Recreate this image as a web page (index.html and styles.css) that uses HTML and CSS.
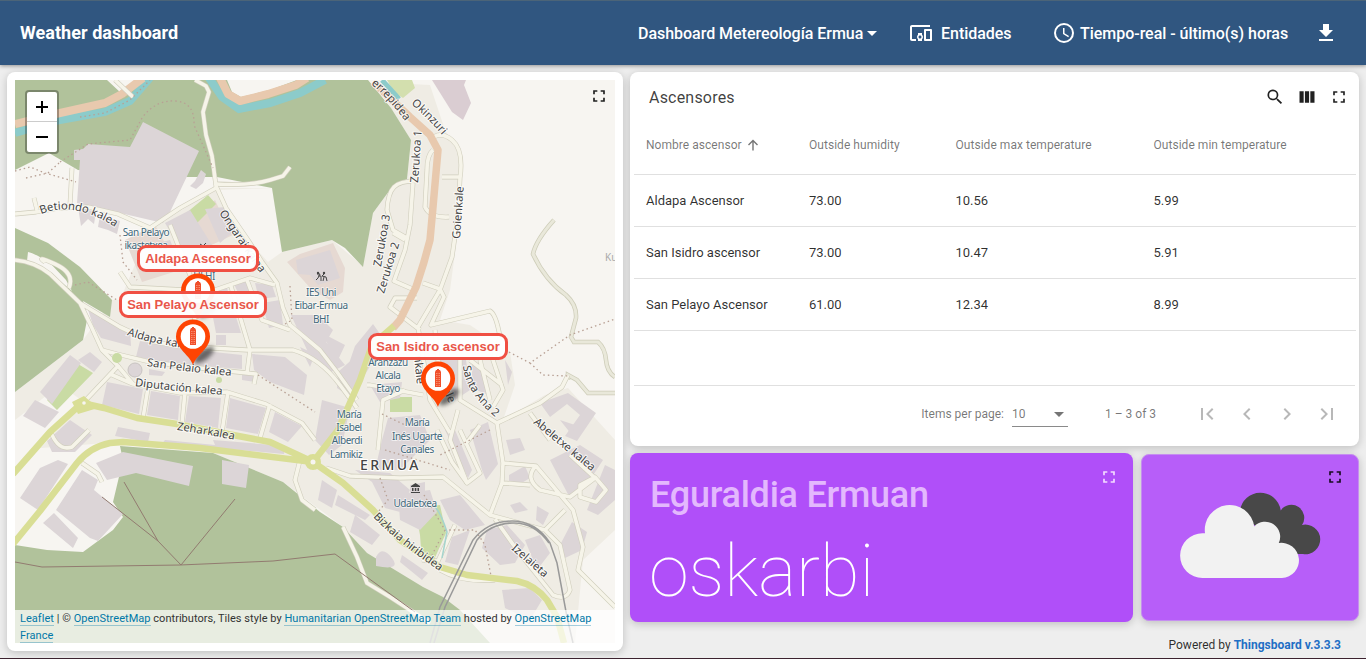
FILE: index.html
```html
<!DOCTYPE html>
<html lang="es">
<head>
<meta charset="utf-8">
<title>Weather dashboard</title>
<link rel="stylesheet" href="styles.css">
</head>
<body>
<svg class="defs" width="0" height="0">
  <symbol id="full" viewBox="0 0 24 24"><path d="M7 14H5v5h5v-2H7v-3zm-2-4h2V7h3V5H5v5zm12 7h-3v2h5v-5h-2v3zM14 5v2h3v3h2V5h-5z"/></symbol>
  <symbol id="pin" viewBox="0 0 60 50">
    <ellipse class="pin-shadow" cx="31" cy="36" rx="12" ry="5" transform="rotate(-38 31 36)"/>
    <path class="pin-body" d="M20 46C17 36 3 30 3 17.500a17 17 0 0 1 34 0C37 30 23 36 20 46z"/>
    <circle class="pin-hole" cx="20" cy="17.500" r="12.300"/>
    <path class="pin-tower" d="M17 26V11l1-2h1V8h2v1h1l1 2v15z"/>
    <path class="pin-windows" d="M18.500 12v13M20 12v13M21.500 12v13"/>
  </symbol>
</svg>
<header class="toolbar">
  <h1 class="title">Weather dashboard</h1>
  <div class="state"><span>Dashboard Metereología Ermua</span><i class="caret"></i></div>
  <div class="entities">
    <svg class="icon24" viewBox="0 0 24 24"><path d="M3 6h18V4H3c-1.100 0-2 .9-2 2v12c0 1.100.9 2 2 2h4v-2H3V6zm10 6H9v1.780c-.61.550-1 1.330-1 2.220s.39 1.670 1 2.220V20h4v-1.780c.61-.550 1-1.340 1-2.220s-.39-1.670-1-2.220V12zm-2 5.500c-.83 0-1.500-.67-1.500-1.500s.67-1.500 1.500-1.500 1.500.67 1.500 1.500-.67 1.500-1.500 1.500zM22 8h-6c-.5 0-1 .5-1 1v10c0 .5.5 1 1 1h6c.5 0 1-.5 1-1V9c0-.5-.5-1-1-1zm-1 10h-4v-8h4v8z"/></svg>
    <span>Entidades</span>
  </div>
  <div class="time">
    <svg class="icon24" viewBox="0 0 24 24"><path d="M12 2a10 10 0 1 0 0 20 10 10 0 0 0 0-20zm0 18a8 8 0 1 1 0-16 8 8 0 0 1 0 16zm.5-13H11v6l5.250 3.150.75-1.230-4.500-2.670z"/></svg>
    <span>Tiempo-real - último(s) horas</span>
  </div>
  <svg class="icon24 download" viewBox="0 0 24 24"><path d="M19 9h-4V3H9v6H5l7 7 7-7zM5 18v2h14v-2H5z"/></svg>
</header>

<main class="dash">
  <section class="card map-card">
    <div class="map">
      <svg class="tiles" viewBox="15 80 600 563">
        <defs>
          <g id="roads">
            <path d="M195 80L206 86 209 92 203 112 206 135 212 156 216 186 226 208 248 240 262 262 277 283 283 308 290 325 320 350 337 372 357 400"/>
            <path d="M216 184Q250 186 270 180L283 176 290 167M216 188L180 208 150 228 118 214 88 207 60 208 36 212 15 214M72 168L70 205M34 198L37 210M115 80L133 97"/>
            <path d="M15 260Q35 262 50 274L80 303 92 328 102 350 118 366 84 402M45 262Q35 255 55 264T69 288M80 303L120 327 150 341 177 346 247 350 293 350Q320 358 340 385L357 408"/>
            <path d="M102 350L117 354 150 362 200 368 256 374 254 384M110 374L133 384 180 393 227 392 266 404 302 423 315 440M148 388L143 418M185 392L182 424M228 392L222 432M270 404L260 438M247 373L250 350 230 283M118 366L133 384M120 272L130 287 185 290 200 335M215 290L250 278 275 285M247 280L262 320 290 330M225 310L255 305M170 225L190 275"/>
            <path d="M430 140Q440 130 452 140T460 178L458 215 452 257 440 290 418 327 430 400 450 433M442 177H460M433 150Q427 155 427 170L425 207Q430 218 449 217M415 181Q400 181 394 187T387 210L393 230 407 238M413 183L410 225 405 250 394 281 417 291M405 240L393 233M417 298L395 298 390 307 420 330M423 283L440 289 444 297 431 325 490 311Q496 314 500 337L493 360 503 390 493 407M435 330L441 390M470 360L502 385M460 358L460 400 497 423M480 360L490 400M367 385L370 385 423 395M405 390L383 400 378 450M458 410L450 440 467 483"/>
            <path d="M497 423L540 403 562 387 568 375M497 423L503 463 502 483 490 515 443 477 400 478 350 476 326 468M437 430L452 462 467 483 480 473 460 430M480 425L465 445M503 463L536 466 573 510 583 547 578 570 615 607M536 466Q524 478 540 490L570 497 595 478 570 455M490 515L545 530 560 545 570 590Q566 601 553 595L517 550 495 519M503 483L530 485M545 530L565 510M530 413L550 440M580 485L595 477 606 490 596 502 580 497zM455 525L438 561 422 560M440 570Q462 583 495 580"/>
            <path d="M343 527L357 557 367 583 390 597 430 623M300 460L295 480 302 500 315 510M50 430Q58 452 72 447L89 430M82 463L98 474 102 482"/>
          </g>
          <path id="l-bet" d="M41 214Q75 200 118 229"/>
          <path id="l-ong" d="M219 213Q240 245 265 280"/>
          <path id="l-ald" d="M127 335Q150 344 210 352"/>
          <path id="l-pel" d="M147 366Q180 371 232 376"/>
          <path id="l-dip" d="M135 386Q170 391 225 395"/>
          <path id="l-zeh" d="M177 430Q205 434 240 441"/>
          <path id="l-err" d="M371 84Q390 100 408 125"/>
          <path id="l-oki" d="M411 104Q428 118 450 144"/>
          <path id="l-san" d="M463 366Q465 395 505 425"/>
          <path id="l-abe" d="M533 423Q560 446 600 478"/>
          <path id="l-biz" d="M373 517Q400 545 447 576"/>
          <path id="l-ize" d="M511 549L550 583"/>
        </defs>
        <rect class="land" x="15" y="80" width="600" height="563"/>
        <path class="urban" d="M83 340L112 300 150 230 217 188 272 188 282 252 332 240 363 266 373 213 392 187 407 179 411 140 391 108 372 82 430 85 445 130 462 160 462 200 450 290 440 320 470 325 510 352 515 385 503 420 545 395 568 388 615 440V530L583 560 575 643H430L343 527 283 482 213 453 120 442 15 450V392z"/>
        <path class="land" d="M217 190L272 188 282 252 268 262 248 240zM15 420L60 385 84 402 15 475zM89 207L150 229 120 300 112 300 80 267 50 243z"/>
        <path class="forest" d="M15 80H368L391 108 411 140 407 179 392 187 373 213 363 267 345 248 332 240 282 252 272 188 217 177H188L78 170 49 153 15 170z"/>
        <path class="forest" d="M15 228L48 243 80 267 112 300 110 317 83 301 87 320 83 340 15 392z"/>
        <path class="forest" d="M15 545L47 550 83 552 113 530 123 517 113 502 123 460 120 446 213 453 283 482 320 512 343 527 367 553 423 587 443 597 460 610 490 643H15z"/>
        <path class="land" d="M227 80L232 92 241 97 270 90 297 80zM107 80L121 93 137 80zM28 252Q34 253 50 263L66 280 72 291 48 271 27 261z"/>
        <path class="scrub" d="M387 80H412L415 88 403 98 394 92z"/>
        <path class="industrial" d="M432 80H466L464 85 471 103 463 120 452 112z"/>
        <path class="water" d="M15 133L60 120 105 112 130 101 150 78M209 78L222 97 239 109 270 103 300 93 325 80"/>
        <path class="water thin" d="M382 80L399 99"/>
        <path class="primary" d="M15 124L60 113 105 103 122 94 143 78M220 78L228 94 240 101 268 94 296 85 307 78"/>
        <path class="bldg" d="M143 122L199 151 170 212 163 223 77 203 80 160H74V150L83 149 88 144 130 147zM201 170L206 174 203 183 196 189 190 186 195 181z"/>
        <path class="school" d="M287 262L300 254 333 243 345 268 343 292 330 300 312 290zM190 222L215 200 222 215 233 235 205 248zM125 240L155 225 180 270 142 282z"/>
        <path class="grass" d="M185 214L208 195 216 204 197 223zM47 400L78 364 93 373 57 410zM390 397H412V412H390zM415 508L440 505 446 533 433 562 422 562 420 535z"/>
        <path class="bldg" d="M78 207L96 212 94 224 88 219 81 226zM100 215L120 221 117 234 108 230 98 227zM165 223L190 210 212 245 190 265zM205 209L225 207 235 230 220 243zM296 260L330 250 340 278 318 285 310 275 298 274z"/>
        <path class="bldg" d="M87 307L130 330 131 346 101 338 93 325zM140 341L176 348 242 355 242 369 178 364 136 357zM40 392L70 355 81 363 52 404zM78 360L90 352 102 362 94 372zM23 416L35 400 59 412 45 428zM107 382L143 389 139 414 102 405zM151 391L180 396 178 420 147 415zM189 396L221 398 218 428 185 422zM230 398L266 408 258 434 226 428zM275 412L302 426 288 442 269 432zM252 354L285 357 307 375 304 395 270 382 254 370zM149 369L165 372 162 376 149 375zM216 335H226V345H216zM242 373L255 375V382L242 380z"/>
        <path class="bldg" d="M208 292L227 288 241 333 216 333zM234 284L249 279 253 293 240 297zM255 283L272 285 276 297 259 299zM262 303L280 300 283 325 269 328zM291 315L318 315 333 330 326 342 345 365 329 373 307 350zM300 347L315 354 310 367zM320 332L345 345 338 360zM355 346L373 324 385 341 363 378 345 375zM338 372L357 355 365 375 352 398 337 388zM150 245L170 240 178 260 154 264zM118 427L150 433 148 442 115 436zM165 440L215 445 213 440 285 446 284 454 240 450 160 446z"/>
        <path class="bldg" d="M96 463L123 452 193 466 189 486 136 473 107 480zM222 460L249 465 246 488 222 484zM56 510L82 470 98 480 94 490 123 514 98 541 90 538zM43 523L54 513 78 538 73 548zM20 498L40 468 58 460 68 464 38 510zM47 441L70 420 92 435 75 452 52 452z"/>
        <path class="bldg" d="M370 385L402 382 400 398 380 402zM322 400L350 408 342 445 329 455 315 440zM388 418L420 415 430 440 400 470 375 470 382 440zM440 360L466 360 470 390 455 400zM472 360L486 370 488 395 472 388zM505 360L512 372 508 385zM445 430L455 430 472 470 468 478zM470 430L488 422 498 464 486 480 482 470zM506 440L520 438 525 450 510 455zM540 403L568 393 596 413 577 441 565 436 580 415 567 404 550 417zM509 475L525 466 530 478 520 484 509 481zM550 460L580 445 603 460 590 480 570 498zM605 465L615 470V500L598 515 587 510zM572 522L587 532 582 550 565 558 560 545zM355 470L390 473 410 490 400 512 385 508 372 482zM410 485L425 482V494H410zM398 494L430 490 437 512 420 530 400 520zM440 500L460 495 485 525 465 530 450 520zM452 537L470 530 458 565 445 562zM487 530L507 525 525 545 515 563 500 565 482 548zM525 540L540 535 550 553 537 570zM510 505L520 502 528 510 515 513zM502 590L530 588 542 600 530 620 505 608zM322 480L337 490 332 508 318 500zM338 495L370 515 365 520 335 505zM355 515L380 535 372 545 350 532zM402 555L428 573 422 580 400 562zM376 557Q382 545 392 558T376 566z"/>
        <path class="bldg" d="M560 420L575 425 572 435zM537 506L549 513 543 525 536 520z"/>
        <path class="tracks" d="M554 220Q536 240 533 254 545 280 566 295 577 305 576 318L571 337 574 342 598 342Q605 348 606 360T615 377M568 380L568 375 577 380 588 393H615"/>
        <path class="tracks in" d="M554 220Q536 240 533 254 545 280 566 295 577 305 576 318L571 337 574 342 598 342Q605 348 606 360T615 377M568 380L568 375 577 380 588 393H615"/>
        <use href="#roads" class="road-casing"/>
        <use href="#roads" class="road-fill"/>
        <path class="primary mid" d="M373 82L410 117 430 135 438 150 433 207 430 240 424 262 416 287 400 320 393 328"/>
        <path class="yellow" d="M13 474L50 432 82 403 104 408 137 418 177 424 233 435 270 442 313 462M13 544L40 511 77 463Q90 447 110 443L123 442 200 448 313 462 338 430 360 380 372 345 394 326M313 462L343 483 373 510 400 540 440 567 467 575 517 581Q535 585 547 600L557 617 564 643"/>
        <circle class="yellow dot" cx="313" cy="462" r="8"/><circle class="land" cx="313" cy="462" r="2.500"/><path class="yellow dot" d="M72 402L84 396 98 408 78 414z"/><circle class="land" cx="84" cy="403" r="1.800"/>
        <circle class="grass" cx="117" cy="358" r="5"/><circle class="grass" cx="219" cy="380" r="3"/><circle class="bldg ring" cx="135" cy="370" r="7"/>
        <path class="path" d="M60 162L88 144 130 140 142 118Q155 100 175 101T194 125L213 168M15 171L30 167 45 173 76 182M26 178L48 173 60 162M80 117L105 113 130 100 150 80M120 235L123 262 137 280M290 286L292 320 285 324M258 375L315 412M382 414L405 425M505 350L530 363 570 335 615 319M530 363L543 375 568 376M380 478L388 500 378 512M424 495L445 530 475 530 485 545 491 576M445 530L432 555M385 450L450 470M490 430L440 455M75 285L88 282 117 300"/>
        <path class="power" d="M15 562L42 567 180 565 273 561 335 554 415 612M102 497L158 541 181 565 235 499M124 482L158 541"/>
        <path class="rail" d="M430 643L440 607 473 540Q488 521 512 521T550 543L557 563 567 617 573 643M434 643L445 607 477 540Q490 524 512 523T549 543"/>
        <path class="stream" d="M433 505Q440 510 447 532L442 558"/>
        <g class="road-label">
          <text><textPath href="#l-bet">Betiondo kalea</textPath></text>
          <text><textPath href="#l-ong">Ongarai kalea</textPath></text>
          <text><textPath href="#l-ald">Aldapa kalea</textPath></text>
          <text><textPath href="#l-pel">San Pelaio kalea</textPath></text>
          <text><textPath href="#l-dip">Diputación kalea</textPath></text>
          <text><textPath href="#l-zeh">Zeharkalea</textPath></text>
          <text><textPath href="#l-err">errepidea</textPath></text>
          <text><textPath href="#l-oki">Okinzuri</textPath></text>
          <text><textPath href="#l-san">Santa Ana 2</textPath></text>
          <text><textPath href="#l-abe">Abeletxe kalea</textPath></text>
          <text><textPath href="#l-biz">Bizkaia hiribidea</textPath></text>
          <text><textPath href="#l-ize">Izelaieta</textPath></text>
          <text transform="translate(418 183) rotate(-86)">Zerukoa 1</text>
          <text transform="translate(460 239) rotate(-86)">Goienkale</text>
          <text transform="translate(381 267) rotate(-80)">Zerukoa 3</text>
          <text transform="translate(384 294) rotate(-73)">Zerukoa 2</text>
          <text transform="translate(414 356) rotate(84)">nkale</text>
          <text transform="translate(440 384) rotate(65)">kale</text>
        </g>
        <g class="poi-label">
          <text x="146" y="236">San Pelayo</text><text x="146" y="249">ikastetxea</text>
          <text x="204" y="280">HLHI</text>
          <text x="321" y="296">IES Uni</text><text x="321" y="309">Eibar-Ermua</text><text x="321" y="323">BHI</text>
          <text x="388" y="366">Aranzazu</text><text x="388" y="379">Alcala</text><text x="388" y="392">Etayo</text>
          <text x="349" y="418">María</text><text x="349" y="431">Isabel</text><text x="347" y="444">Alberdi</text><text x="346" y="458">Lamikiz</text>
          <text x="417" y="426">María</text><text x="417" y="440">Inés Ugarte</text><text x="417" y="453">Canales</text>
          <text x="415" y="507">Udaletxea</text>
        </g>
        <text class="faint" x="605" y="261">Ku</text>
        <text class="town" x="360" y="470">ERMUA</text>
        <path class="poi" d="M411 486L415.500 483 420 486V487H411zM412 488H413.500V491H412zM414.800 488H416.300V491H414.800zM417.500 488H419V491H417.500zM411 492H420V493H411z"/>
        <path class="kids" d="M317 274H320L318 278 316 280M318 276H321V281M325 273L322 276 326 277 327 281M324 277L323 281M200 244L203 246 206 243"/><circle class="poi" cx="318" cy="273" r="1.200"/><circle class="poi" cx="324" cy="273" r="1.200"/>
      </svg>
      <svg class="pin pin-aldapa"><use href="#pin"/></svg>
      <svg class="pin pin-pelayo"><use href="#pin"/></svg>
      <svg class="pin pin-isidro"><use href="#pin"/></svg>
      <div class="tip tip-aldapa">Aldapa Ascensor</div>
      <div class="tip tip-pelayo">San Pelayo Ascensor</div>
      <div class="tip tip-isidro">San Isidro ascensor</div>
      <div class="zoom"><span class="zoom-btn plus"></span><span class="zoom-btn"></span></div>
      <svg class="icon20 map-full"><use href="#full"/></svg>
      <div class="attribution"><a>Leaflet</a> | © <a>OpenStreetMap</a> contributors, Tiles style by <a>Humanitarian OpenStreetMap Team</a> hosted by <a>OpenStreetMap France</a></div>
    </div>
  </section>

  <div class="right">
    <section class="card table-card">
      <div class="table-head">
        <h2 class="table-title">Ascensores</h2>
        <svg class="icon20" viewBox="0 0 24 24"><path d="M15.500 14h-.79l-.28-.27A6.500 6.500 0 1 0 13.730 14.430l.27.28v.79l5 4.990L20.490 19l-4.990-5zm-6 0a4.500 4.500 0 1 1 0-9 4.500 4.500 0 0 1 0 9z"/></svg>
        <svg class="icon20" viewBox="0 0 24 24"><path d="M3 5h5v14H3zM9.500 5h5v14h-5zM16 5h5v14h-5z"/></svg>
        <svg class="icon20"><use href="#full"/></svg>
      </div>
      <div class="row head"><span>Nombre ascensor<svg class="sort" viewBox="0 0 12 12"><path d="M6 11.500V1.500M1.500 6L6 1.500 10.500 6"/></svg></span><span>Outside humidity</span><span>Outside max temperature</span><span>Outside min temperature</span></div>
      <div class="row"><span>Aldapa Ascensor</span><span>73.00</span><span>10.56</span><span>5.99</span></div>
      <div class="row"><span>San Isidro ascensor</span><span>73.00</span><span>10.47</span><span>5.91</span></div>
      <div class="row"><span>San Pelayo Ascensor</span><span>61.00</span><span>12.34</span><span>8.99</span></div>
      <div class="pager">
        <span>Items per page:</span>
        <span class="select">10<i class="select-arrow"></i></span>
        <span class="range">1 – 3 of 3</span>
        <svg class="nav" viewBox="0 0 24 24"><path d="M18.410 16.590L13.820 12l4.590-4.590L17 6l-6 6 6 6zM6 6h2v12H6z"/></svg>
        <svg class="nav" viewBox="0 0 24 24"><path d="M15.410 7.410L14 6l-6 6 6 6 1.410-1.410L10.830 12z"/></svg>
        <svg class="nav" viewBox="0 0 24 24"><path d="M10 6L8.590 7.410 13.170 12l-4.580 4.590L10 18l6-6z"/></svg>
        <svg class="nav" viewBox="0 0 24 24"><path d="M5.590 7.410L10.180 12l-4.590 4.590L7 18l6-6-6-6zM16 6h2v12h-2z"/></svg>
      </div>
    </section>
    <div class="bottom">
      <section class="card text-card">
        <div class="text-body"><div class="label">Eguraldia Ermuan</div><div class="value">oskarbi</div></div>
        <svg class="icon20"><use href="#full"/></svg>
      </section>
      <section class="card icon-card">
        <svg class="clouds" viewBox="1143 456 216 165">
          <path class="cloud-dark" d="M1241 512a20.500 20.500 0 0 1 40.700-.5 12.500 12.500 0 0 1 21.300 14.500 14.800 14.800 0 1 1 1 29H1285z"/>
          <path class="cloud-light" d="M1203.500 579a22.400 22.400 0 0 1 0-44.800H1206a24.700 24.700 0 1 1 49.200-6.700 15 15 0 0 1 24.600 16.500 17.600 17.600 0 1 1 3.200 35z"/>
        </svg>
        <svg class="icon20 icon-full"><use href="#full"/></svg>
      </section>
    </div>
    <footer class="powered">Powered by <a>Thingsboard v.3.3.3</a></footer>
  </div>
</main>
</body>
</html>
```
FILE: styles.css
```css
* { box-sizing: border-box; }
body { margin: 0; width: 1366px; height: 659px; overflow: hidden; background: #eee; border-bottom: 1px solid #3c222f; font-family: Roboto, sans-serif; color: rgba(0,0,0,.82); display: flex; flex-direction: column; }
.defs { position: absolute; }
h1, h2 { margin: 0; }
.toolbar { height: 65px; flex: none; background: #305680; border-top: 1px solid #4b6478; color: #fff; display: flex; align-items: center; padding: 0 28px 1px 20px; box-shadow: 0 1px 4px rgba(0,0,0,.4); position: relative; font-size: 16px; font-weight: 500; }
.title { font-size: 18px; font-weight: 700; width: 618px; letter-spacing: .05px; }
.toolbar span { padding-top: 2px; letter-spacing: -.03px; }
.state { display: flex; align-items: center; gap: 4px; width: 271px; }
.caret { border: 5px solid transparent; border-top-color: #fff; border-bottom: 0; margin-top: 1px; }
.entities { display: flex; align-items: center; gap: 8px; width: 143px; }
.time { display: flex; align-items: center; gap: 4px; }
.icon24 { width: 24px; height: 24px; fill: #fff; flex: none; }
.download { margin-left: auto; }
.dash { display: grid; grid-template-columns: 616px 729px; gap: 7px; padding: 7px 7px 0; height: 592px; }
.card { background: #fff; border-radius: 8px; box-shadow: 0 2px 8px rgba(0,0,0,.2); }
.map-card { height: 579px; padding: 8px; }
.map { position: relative; width: 600px; height: 563px; overflow: hidden; }
.tiles { display: block; width: 600px; height: 563px; }
.land { fill: #f7f5f1; }
.urban { fill: #efece4; }
.forest { fill: #b1c29b; }
.scrub { fill: #d3dfae; }
.grass { fill: #c9dba4; }
.industrial { fill: #dacdd2; }
.school { fill: #e6d9d2; }
.bldg { fill: #dcd5d7; }
.ring { stroke: #c9c4c2; stroke-width: 1; }
.water { fill: none; stroke: #8ccbca; stroke-width: 8; }
.thin { stroke-width: 5; }
.primary { fill: none; stroke: #e8c9ae; stroke-width: 8; stroke-linejoin: round; }
.mid { stroke-width: 7.500px; }
.yellow { fill: none; stroke: #d9de95; stroke-width: 6.500px; stroke-linejoin: round; }
.dot { fill: #d9de95; stroke: none; }
.road-casing, .road-fill { fill: none; stroke: #d0cebd; stroke-width: 4.800px; stroke-linejoin: round; }
.road-fill { stroke: #f6f4e9; stroke-width: 3.600px; }
.tracks { fill: none; stroke: #cdccb8; stroke-width: 4.500px; }
.tracks.in { stroke: #e9e8da; stroke-width: 3; }
.path { fill: none; stroke: #b8a094; stroke-width: 1.300px; stroke-dasharray: 1.500 3; }
.power { fill: none; stroke: #927b70; stroke-width: 1; }
.rail { fill: none; stroke: #999; stroke-width: 1.500px; }
.stream { fill: none; stroke: #a5d4cd; stroke-width: 1.500px; }
.road-label { font: 11.200px "Noto Sans", sans-serif; fill: #444; stroke: rgba(255,255,255,.7); stroke-width: 2px; paint-order: stroke; }
.poi-label { font: 10px "Noto Sans", sans-serif; letter-spacing: -.45px; fill: #41687a; text-anchor: middle; stroke: rgba(255,255,255,.7); stroke-width: 1.500px; paint-order: stroke; }
.faint { font: 10px "Noto Sans", sans-serif; fill: #aaa; }
.town { font: 500 14px "Noto Sans", sans-serif; fill: #444; letter-spacing: 2.400px; stroke: #fff; stroke-width: 2px; paint-order: stroke; }
.poi { fill: #444; }
.kids { fill: none; stroke: #444; stroke-width: 1; }
.pin { position: absolute; width: 60px; height: 50px; }
.pin-aldapa { left: 163px; top: 193px; }
.pin-pelayo { left: 158px; top: 239px; }
.pin-isidro { left: 403px; top: 281px; }
.pin-body { fill: #fe4403; }
.pin-hole { fill: #fff; }
.pin-tower { fill: #f0502c; }
.pin-windows { fill: none; stroke: #ffb5a0; stroke-width: .6px; stroke-dasharray: 1 1; }
.pin-shadow { fill: rgba(40,40,40,.65); filter: blur(2px); }
.tip { position: absolute; height: 27px; border: 3px solid #f04f43; border-radius: 9px; background: rgba(255,255,255,.95); color: #e9564a; font: bold 13px/21px "Liberation Sans", sans-serif; text-align: center; white-space: nowrap; }
.tip-aldapa { left: 122px; top: 165px; width: 122px; }
.tip-pelayo { left: 104px; top: 211px; width: 148px; }
.tip-isidro { left: 353px; top: 253px; width: 140px; }
.zoom { position: absolute; left: 10px; top: 10px; width: 34px; height: 64px; border: 2px solid rgba(0,0,0,.3); border-radius: 4px; background: #fff; background-clip: padding-box; }
.zoom-btn { display: flex; align-items: center; justify-content: center; height: 30px; position: relative; }
.zoom-btn::before { content: ""; width: 12px; height: 2px; background: #000; }
.plus { border-bottom: 1px solid #ccc; }
.plus::after { content: ""; position: absolute; width: 2px; height: 12px; background: #000; }
.icon20 { width: 20px; height: 20px; fill: rgba(0,0,0,.87); flex: none; }
.map-full { position: absolute; left: 574px; top: 6px; }
.attribution { position: absolute; left: 0; right: 0; bottom: 0; height: 33px; background: rgba(255,255,255,.7); padding: 0 5px; font: 11px/17px Roboto, sans-serif; letter-spacing: .035px; color: #333; }
.attribution a { color: #0078a8; border-bottom: 1px solid rgba(0,120,168,.35); }
.right { display: flex; flex-direction: column; gap: 7px; }
.table-card { height: 374px; padding: 0 4px; display: flex; flex-direction: column; }
.table-head { display: flex; align-items: center; height: 50px; gap: 12px; padding-right: 6px; }
.table-title { font-size: 16px; font-weight: 400; margin: 0 auto 0 15px; letter-spacing: .2px; color: rgba(0,0,0,.76); }
.row { display: grid; grid-template-columns: 163px 146.500px 198px 1fr; align-items: center; height: 52px; padding-left: 12px; border-bottom: 1px solid #e0e0e0; font-size: 13px; flex: none; margin-right: -1px; }
.head { height: 53px; font-size: 12px; letter-spacing: .04px; color: rgba(0,0,0,.54); padding-bottom: 7px; }
.sort { width: 12px; height: 12px; margin-left: 5px; vertical-align: -2px; fill: none; stroke: #757575; stroke-width: 1.400px; }
.pager { margin-top: auto; height: 61px; border-top: 1px solid #e0e0e0; display: flex; align-items: center; justify-content: flex-end; color: rgba(0,0,0,.54); font-size: 12px; padding: 0 16px 4px 0; }
.select { width: 56px; height: 24px; margin: 1px 37px 0 8px; border-bottom: 1px solid #8a8a8a; display: flex; align-items: center; justify-content: space-between; padding-right: 4px; }
.select-arrow { border: 5px solid transparent; border-top-color: #757575; border-bottom: 0; }
.range { width: 90px; }
.nav { width: 24px; height: 24px; margin-left: 16px; fill: #b8b8b8; }
.range + .nav { margin-left: 0; }
.bottom { display: flex; height: 169px; gap: 8px; }
.text-card { width: 503px; background: #b04ff9; display: flex; justify-content: space-between; padding: 14px 14px 0 20px; }
.text-card .icon20 { fill: #f3dcff; }
.label { font-size: 36px; font-weight: 500; letter-spacing: -.25px; line-height: 56px; color: #e3b8fd; }
.value { font-size: 72px; font-weight: 100; letter-spacing: -.1px; line-height: 84px; margin: 7px 0 0 -1px; color: #fff; }
.icon-card { width: 218px; height: 167px; margin-top: 1px; background: #b75ef9; border: 1px solid #c58ef0; position: relative; }
.clouds { display: block; width: 216px; height: 165px; }
.cloud-dark { fill: #484848; }
.cloud-light { fill: #f2f2f2; }
.icon-full { position: absolute; right: 13px; top: 12px; }
.powered { font-size: 12px; line-height: 14px; margin-top: 9px; text-align: right; padding-right: 18px; }
.powered a { color: #1f6fc5; font-weight: 700; }
```
